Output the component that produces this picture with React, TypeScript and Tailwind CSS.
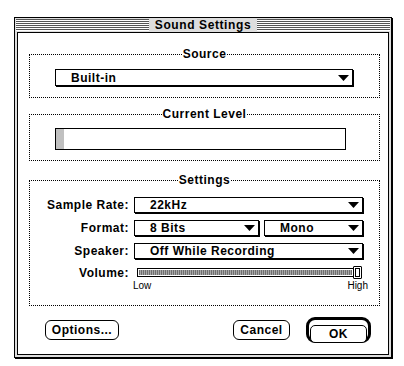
import React from "react";

const font = { fontFamily: '"Liberation Sans", Arial, sans-serif' };

function Arrow() {
  return (
    <svg width="11" height="6" viewBox="0 0 11 6" className="shrink-0">
      <polygon points="0,0 11,0 5.5,6" fill="#000" />
    </svg>
  );
}

function Popup({ label, className }: { label: string; className: string }) {
  return (
    <div
      className={`flex items-center justify-between border border-black bg-white shadow-[1px_1px_0_#000] pl-[15px] pr-[3px] text-[12px] font-bold tracking-[0.5px] text-black leading-none ${className}`}
    >
      <span>{label}</span>
      <Arrow />
    </div>
  );
}

function Group({ title, className, children }: { title: string; className: string; children?: React.ReactNode }) {
  return (
    <div className={`relative border border-dotted border-black ${className}`}>
      <div className="absolute left-0 right-0 top-[-8px] flex justify-center">
        <span className="bg-white px-[1px] text-[12px] font-bold leading-[14px] tracking-[0.5px] text-black">
          {title}
        </span>
      </div>
      {children}
    </div>
  );
}

function Label({ children }: { children: React.ReactNode }) {
  return (
    <div className="w-[99px] text-right text-[12px] font-bold tracking-[0.5px] leading-none text-black">
      {children}
    </div>
  );
}

export default function App() {
  return (
    <div className="w-[404px] h-[366px] bg-white pt-[17px] pl-[14px]" style={font}>
      <div className="w-[378px] h-[341px] border border-black bg-[#dddddd] flex flex-col shadow-[1px_1px_0_#000]">
        {/* title bar */}
        <div className="h-[14px] flex items-center px-[1px]">
          <div className="flex-1 h-[12px] bg-[repeating-linear-gradient(to_bottom,#555555_0px,#555555_1px,#ffffff_1px,#ffffff_2px)]" />
          <div className="px-[6px] text-[12px] font-bold tracking-[0.6px] leading-none text-black">
            Sound Settings
          </div>
          <div className="flex-1 h-[12px] bg-[repeating-linear-gradient(to_bottom,#555555_0px,#555555_1px,#ffffff_1px,#ffffff_2px)]" />
        </div>
        {/* content */}
        <div className="mx-[2px] mb-[2px] flex-1 border border-black bg-white pl-[11px] pr-[8px] flex flex-col">
          <Group title="Source" className="mt-[21px] h-[44px] pt-[14px] pl-[25px]">
            <Popup label="Built-in" className="w-[298px] h-[17px]" />
          </Group>

          <Group title="Current Level" className="mt-[16px] h-[47px] pt-[13px] pl-[25px]">
            <div className="w-[291px] h-[22px] border border-black bg-white flex">
              <div className="w-[8px] h-full bg-[#c0c0c0]" />
            </div>
          </Group>

          <Group title="Settings" className="mt-[19px] h-[126px] pt-[16px] flex flex-col gap-[7px]">
            <div className="flex items-center gap-[5px] h-[16px]">
              <Label>Sample Rate:</Label>
              <Popup label="22kHz" className="w-[229px] h-[16px]" />
            </div>
            <div className="flex items-center gap-[5px] h-[16px]">
              <Label>Format:</Label>
              <Popup label="8 Bits" className="w-[125px] h-[16px]" />
              <Popup label="Mono" className="w-[99px] h-[16px]" />
            </div>
            <div className="flex items-center gap-[5px] h-[16px]">
              <Label>Speaker:</Label>
              <Popup label="Off While Recording" className="w-[229px] h-[16px]" />
            </div>
            <div className="flex flex-col">
              <div className="flex items-center gap-[5px] h-[13px]">
                <Label>Volume:</Label>
                <div className="ml-[3px] flex items-center">
                  <div className="w-[217px] h-[9px] border border-black bg-white p-[1px]">
                    <div className="h-full bg-[repeating-linear-gradient(90deg,#6e6e6e_0px,#6e6e6e_1px,#a8a8a8_1px,#a8a8a8_2px)]" />
                  </div>
                  <div className="w-[9px] h-[13px] border border-black bg-white rounded-[1px] p-[1px] ml-[-1px]">
                    <div className="w-full h-full border border-black" />
                  </div>
                </div>
              </div>
              <div className="flex justify-between pl-[103px] pr-[11px] mt-[2px] text-[10px] leading-none text-black">
                <span>Low</span>
                <span>High</span>
              </div>
            </div>
          </Group>

          <div className="mt-[11px] flex items-center">
            <button className="ml-[16px] w-[74px] h-[20px] border border-black rounded-[6px] bg-white text-[12px] font-bold tracking-[0.5px] leading-none text-black">
              Options...
            </button>
            <button className="ml-[114px] w-[57px] h-[20px] border border-black rounded-[6px] bg-white text-[12px] font-bold tracking-[0.5px] leading-none text-black">
              Cancel
            </button>
            <div className="ml-[16px] w-[65px] h-[26px] border-[3px] border-black rounded-[9px] p-[1px]">
              <button className="w-full h-full border border-black rounded-[5px] bg-white text-[12px] font-bold tracking-[0.5px] leading-none text-black">
                OK
              </button>
            </div>
          </div>
        </div>
      </div>
    </div>
  );
}
